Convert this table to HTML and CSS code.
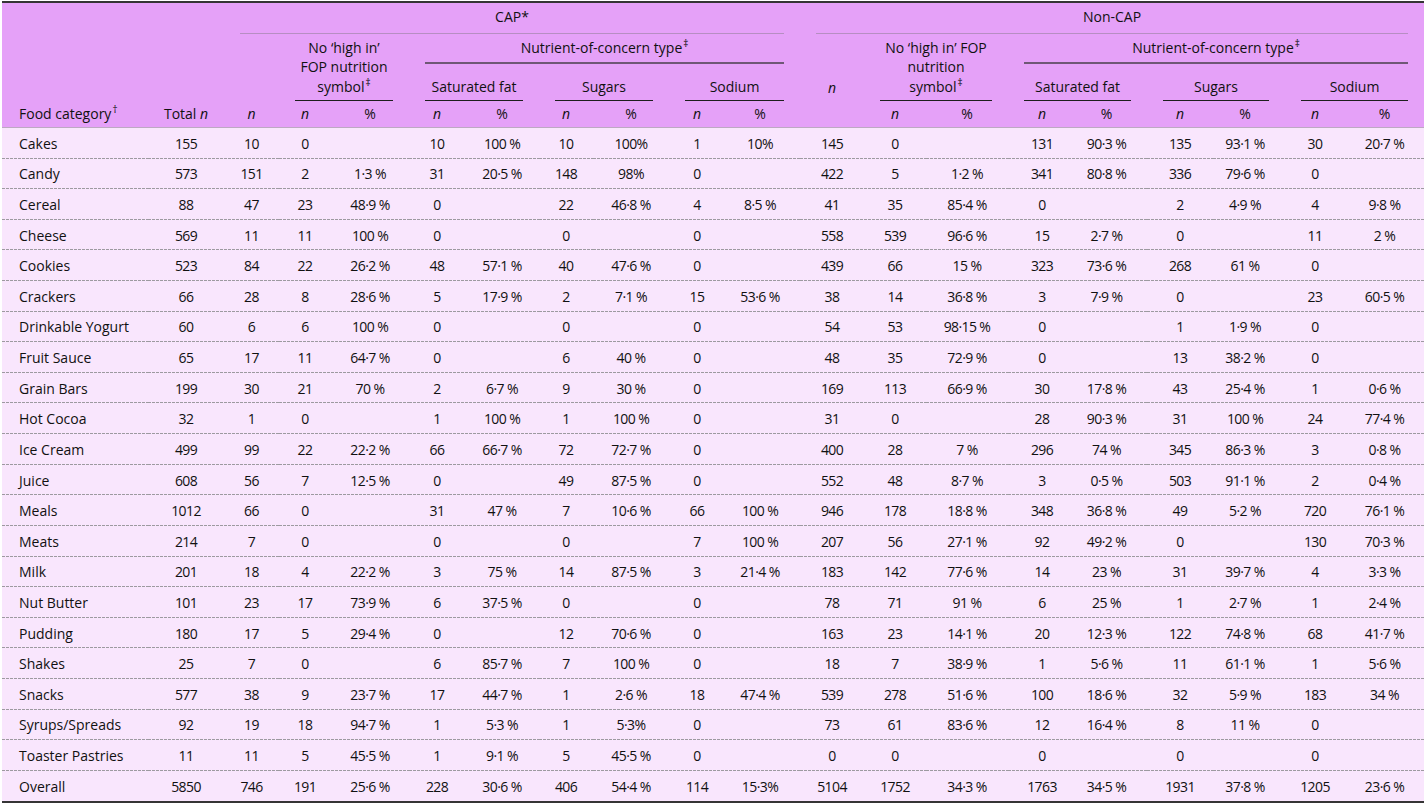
FILE: index.html
```html
<!DOCTYPE html>
<html lang="en">
<head>
<meta charset="utf-8">
<title>FOP nutrition symbols by food category</title>
<link rel="stylesheet" href="styles.css">
</head>
<body>
<table class="data">
<colgroup>
<col class="w-food"><col class="w-total"><col class="w-capn"><col class="w-cnhn"><col class="w-cnhp"><col class="w-csfn"><col class="w-csfp"><col class="w-csun"><col class="w-csup"><col class="w-cson"><col class="w-csop"><col class="w-ncn"><col class="w-nnhn"><col class="w-nnhp"><col class="w-nsfn"><col class="w-nsfp"><col class="w-nsun"><col class="w-nsup"><col class="w-nson"><col class="w-nsop">
</colgroup>
<thead>
<tr class="r1">
<th rowspan="4" class="food hb">Food category<sup>†</sup></th>
<th rowspan="4" class="total hb">Total <i>n</i></th>
<th colspan="9" class="grp"><div class="ul ul-light p7">CAP*</div></th>
<th colspan="9" class="grp"><div class="ul ul-light p7">Non-CAP</div></th>
</tr>
<tr class="r2">
<th rowspan="3" class="capn hb"><i>n</i></th>
<th colspan="2" rowspan="2" class="grp"><div class="ul ul-dark p4">No ‘high in’<br>FOP nutrition<br>symbol<sup>‡</sup></div></th>
<th colspan="6" class="grp"><div class="ul ul-mid p5">Nutrient-of-concern type<sup>‡</sup></div></th>
<th rowspan="3" class="ncapn hb"><i>n</i></th>
<th colspan="2" rowspan="2" class="grp"><div class="ul ul-dark p4">No ‘high in’ FOP<br>nutrition<br>symbol<sup>‡</sup></div></th>
<th colspan="6" class="grp"><div class="ul ul-mid p5">Nutrient-of-concern type<sup>‡</sup></div></th>
</tr>
<tr class="r3">
<th colspan="2" class="grp"><div class="ul ul-dark p4">Saturated fat</div></th>
<th colspan="2" class="grp"><div class="ul ul-dark p4">Sugars</div></th>
<th colspan="2" class="grp"><div class="ul ul-dark p4">Sodium</div></th>
<th colspan="2" class="grp"><div class="ul ul-dark p4">Saturated fat</div></th>
<th colspan="2" class="grp"><div class="ul ul-dark p4">Sugars</div></th>
<th colspan="2" class="grp"><div class="ul ul-dark p4">Sodium</div></th>
</tr>
<tr class="r4">
<th class="hb"><i>n</i></th><th class="hb">%</th>
<th class="hb"><i>n</i></th><th class="hb">%</th>
<th class="hb"><i>n</i></th><th class="hb">%</th>
<th class="hb"><i>n</i></th><th class="hb pr5">%</th>
<th class="hb"><i>n</i></th><th class="hb">%</th>
<th class="hb"><i>n</i></th><th class="hb pr10">%</th>
<th class="hb"><i>n</i></th><th class="hb pr8">%</th>
<th class="hb"><i>n</i></th><th class="hb">%</th>
</tr>
</thead>
<tbody>
<tr><td>Cakes</td><td>155</td><td>10</td><td>0</td><td></td><td>10</td><td>100 %</td><td>10</td><td>100%</td><td>1</td><td>10%</td><td>145</td><td>0</td><td></td><td>131</td><td>90·3 %</td><td>135</td><td>93·1 %</td><td>30</td><td>20·7 %</td></tr>
<tr><td>Candy</td><td>573</td><td>151</td><td>2</td><td>1·3 %</td><td>31</td><td>20·5 %</td><td>148</td><td>98%</td><td>0</td><td></td><td>422</td><td>5</td><td>1·2 %</td><td>341</td><td>80·8 %</td><td>336</td><td>79·6 %</td><td>0</td><td></td></tr>
<tr><td>Cereal</td><td>88</td><td>47</td><td>23</td><td>48·9 %</td><td>0</td><td></td><td>22</td><td>46·8 %</td><td>4</td><td>8·5 %</td><td>41</td><td>35</td><td>85·4 %</td><td>0</td><td></td><td>2</td><td>4·9 %</td><td>4</td><td>9·8 %</td></tr>
<tr><td>Cheese</td><td>569</td><td>11</td><td>11</td><td>100 %</td><td>0</td><td></td><td>0</td><td></td><td>0</td><td></td><td>558</td><td>539</td><td>96·6 %</td><td>15</td><td>2·7 %</td><td>0</td><td></td><td>11</td><td>2 %</td></tr>
<tr><td>Cookies</td><td>523</td><td>84</td><td>22</td><td>26·2 %</td><td>48</td><td>57·1 %</td><td>40</td><td>47·6 %</td><td>0</td><td></td><td>439</td><td>66</td><td>15 %</td><td>323</td><td>73·6 %</td><td>268</td><td>61 %</td><td>0</td><td></td></tr>
<tr><td>Crackers</td><td>66</td><td>28</td><td>8</td><td>28·6 %</td><td>5</td><td>17·9 %</td><td>2</td><td>7·1 %</td><td>15</td><td>53·6 %</td><td>38</td><td>14</td><td>36·8 %</td><td>3</td><td>7·9 %</td><td>0</td><td></td><td>23</td><td>60·5 %</td></tr>
<tr><td>Drinkable Yogurt</td><td>60</td><td>6</td><td>6</td><td>100 %</td><td>0</td><td></td><td>0</td><td></td><td>0</td><td></td><td>54</td><td>53</td><td>98·15 %</td><td>0</td><td></td><td>1</td><td>1·9 %</td><td>0</td><td></td></tr>
<tr><td>Fruit Sauce</td><td>65</td><td>17</td><td>11</td><td>64·7 %</td><td>0</td><td></td><td>6</td><td>40 %</td><td>0</td><td></td><td>48</td><td>35</td><td>72·9 %</td><td>0</td><td></td><td>13</td><td>38·2 %</td><td>0</td><td></td></tr>
<tr><td>Grain Bars</td><td>199</td><td>30</td><td>21</td><td>70 %</td><td>2</td><td>6·7 %</td><td>9</td><td>30 %</td><td>0</td><td></td><td>169</td><td>113</td><td>66·9 %</td><td>30</td><td>17·8 %</td><td>43</td><td>25·4 %</td><td>1</td><td>0·6 %</td></tr>
<tr><td>Hot Cocoa</td><td>32</td><td>1</td><td>0</td><td></td><td>1</td><td>100 %</td><td>1</td><td>100 %</td><td>0</td><td></td><td>31</td><td>0</td><td></td><td>28</td><td>90·3 %</td><td>31</td><td>100 %</td><td>24</td><td>77·4 %</td></tr>
<tr><td>Ice Cream</td><td>499</td><td>99</td><td>22</td><td>22·2 %</td><td>66</td><td>66·7 %</td><td>72</td><td>72·7 %</td><td>0</td><td></td><td>400</td><td>28</td><td>7 %</td><td>296</td><td>74 %</td><td>345</td><td>86·3 %</td><td>3</td><td>0·8 %</td></tr>
<tr><td>Juice</td><td>608</td><td>56</td><td>7</td><td>12·5 %</td><td>0</td><td></td><td>49</td><td>87·5 %</td><td>0</td><td></td><td>552</td><td>48</td><td>8·7 %</td><td>3</td><td>0·5 %</td><td>503</td><td>91·1 %</td><td>2</td><td>0·4 %</td></tr>
<tr><td>Meals</td><td>1012</td><td>66</td><td>0</td><td></td><td>31</td><td>47 %</td><td>7</td><td>10·6 %</td><td>66</td><td>100 %</td><td>946</td><td>178</td><td>18·8 %</td><td>348</td><td>36·8 %</td><td>49</td><td>5·2 %</td><td>720</td><td>76·1 %</td></tr>
<tr><td>Meats</td><td>214</td><td>7</td><td>0</td><td></td><td>0</td><td></td><td>0</td><td></td><td>7</td><td>100 %</td><td>207</td><td>56</td><td>27·1 %</td><td>92</td><td>49·2 %</td><td>0</td><td></td><td>130</td><td>70·3 %</td></tr>
<tr><td>Milk</td><td>201</td><td>18</td><td>4</td><td>22·2 %</td><td>3</td><td>75 %</td><td>14</td><td>87·5 %</td><td>3</td><td>21·4 %</td><td>183</td><td>142</td><td>77·6 %</td><td>14</td><td>23 %</td><td>31</td><td>39·7 %</td><td>4</td><td>3·3 %</td></tr>
<tr><td>Nut Butter</td><td>101</td><td>23</td><td>17</td><td>73·9 %</td><td>6</td><td>37·5 %</td><td>0</td><td></td><td>0</td><td></td><td>78</td><td>71</td><td>91 %</td><td>6</td><td>25 %</td><td>1</td><td>2·7 %</td><td>1</td><td>2·4 %</td></tr>
<tr><td>Pudding</td><td>180</td><td>17</td><td>5</td><td>29·4 %</td><td>0</td><td></td><td>12</td><td>70·6 %</td><td>0</td><td></td><td>163</td><td>23</td><td>14·1 %</td><td>20</td><td>12·3 %</td><td>122</td><td>74·8 %</td><td>68</td><td>41·7 %</td></tr>
<tr><td>Shakes</td><td>25</td><td>7</td><td>0</td><td></td><td>6</td><td>85·7 %</td><td>7</td><td>100 %</td><td>0</td><td></td><td>18</td><td>7</td><td>38·9 %</td><td>1</td><td>5·6 %</td><td>11</td><td>61·1 %</td><td>1</td><td>5·6 %</td></tr>
<tr><td>Snacks</td><td>577</td><td>38</td><td>9</td><td>23·7 %</td><td>17</td><td>44·7 %</td><td>1</td><td>2·6 %</td><td>18</td><td>47·4 %</td><td>539</td><td>278</td><td>51·6 %</td><td>100</td><td>18·6 %</td><td>32</td><td>5·9 %</td><td>183</td><td>34 %</td></tr>
<tr><td>Syrups/Spreads</td><td>92</td><td>19</td><td>18</td><td>94·7 %</td><td>1</td><td>5·3 %</td><td>1</td><td>5·3%</td><td>0</td><td></td><td>73</td><td>61</td><td>83·6 %</td><td>12</td><td>16·4 %</td><td>8</td><td>11 %</td><td>0</td><td></td></tr>
<tr><td>Toaster Pastries</td><td>11</td><td>11</td><td>5</td><td>45·5 %</td><td>1</td><td>9·1 %</td><td>5</td><td>45·5 %</td><td>0</td><td></td><td>0</td><td>0</td><td></td><td>0</td><td></td><td>0</td><td></td><td>0</td><td></td></tr>
<tr><td>Overall</td><td>5850</td><td>746</td><td>191</td><td>25·6 %</td><td>228</td><td>30·6 %</td><td>406</td><td>54·4 %</td><td>114</td><td>15·3%</td><td>5104</td><td>1752</td><td>34·3 %</td><td>1763</td><td>34·5 %</td><td>1931</td><td>37·8 %</td><td>1205</td><td>23·6 %</td></tr>
</tbody>
</table>
</body>
</html>
```
FILE: styles.css
```css
* { box-sizing: border-box; }

body {
  margin: 0;
  background: #ffffff;
  font-family: "Open Sans", "Noto Sans", sans-serif;
  font-size: 14px;
  color: #111111;
}

.data {
  margin: 1px 2px 0;
  width: 1422px;
  table-layout: fixed;
  border-collapse: separate;
  border-spacing: 0;
  border-top: 2px solid #353535;
  border-bottom: 2px solid #353535;
}

.w-food { width: 146px; }
.w-total { width: 76px; }
.w-capn { width: 55px; }
.w-cnhn { width: 52px; }
.w-cnhp { width: 78px; }
.w-csfn { width: 56px; }
.w-csfp { width: 74px; }
.w-csun { width: 54px; }
.w-csup { width: 76px; }
.w-cson { width: 56px; }
.w-csop { width: 75px; }
.w-ncn { width: 64px; }
.w-nnhn { width: 62px; }
.w-nnhp { width: 82px; }
.w-nsfn { width: 68px; }
.w-nsfp { width: 71px; }
.w-nsun { width: 66px; }
.w-nsup { width: 72px; }
.w-nson { width: 60px; }
.w-nsop { width: 79px; }

/* ---------- header ---------- */
thead th {
  background: #e5a1f8;
  font-weight: normal;
  line-height: 19.5px;
  padding: 0;
  text-align: center;
  vertical-align: bottom;
  white-space: nowrap;
}

.r1 { height: 31px; }
.r2 { height: 30px; }
.r3 { height: 37px; }
.r4 { height: 27px; }

.r4 th { vertical-align: middle; }

thead th.hb { border-bottom: 1px solid #bda9c2; }

th.food {
  text-align: left;
  padding: 0 0 4px 17px;
}
th.total { padding-bottom: 4px; }
th.capn { padding-bottom: 4px; }
th.ncapn {
  vertical-align: middle;
  padding-top: 14px;
}

th.grp { padding: 0 16px; }

.ul { text-align: center; }
.ul-light { border-bottom: 1px solid #b68ec2; }
.ul-mid { border-bottom: 2px solid #6f5776; }
.ul-dark { border-bottom: 1px solid #1e1e1e; }
.p7 { padding-bottom: 7px; }
.p5 { padding-bottom: 5px; }
.p4 { padding-bottom: 4px; }

sup {
  font-size: 10px;
  line-height: 0;
  vertical-align: 6px;
  margin-left: 1px;
}

i { font-style: italic; }

.pr5 { padding-right: 5px; }
.pr8 { padding-right: 8px; }
.pr10 { padding-right: 10px; }

/* ---------- body ---------- */
tbody tr { height: 30.62px; }

tbody td {
  padding: 0;
  text-align: center;
  vertical-align: middle;
  white-space: nowrap;
  line-height: 19px;
  background-color: #f9e6fd;
  background-image: repeating-linear-gradient(to right, #9d9aa0 0 3px, transparent 3px 4px);
  background-size: 100% 1px;
  background-position: left bottom;
  background-repeat: no-repeat;
}

tbody td + td { letter-spacing: -0.6px; }

tbody tr:last-child td { background-image: none; }

tbody td:first-child {
  text-align: left;
  padding-left: 17px;
}

tbody td:nth-child(11) { padding-right: 5px; }
tbody td:nth-child(16) { padding-right: 10px; }
tbody td:nth-child(18) { padding-right: 8px; }
```
